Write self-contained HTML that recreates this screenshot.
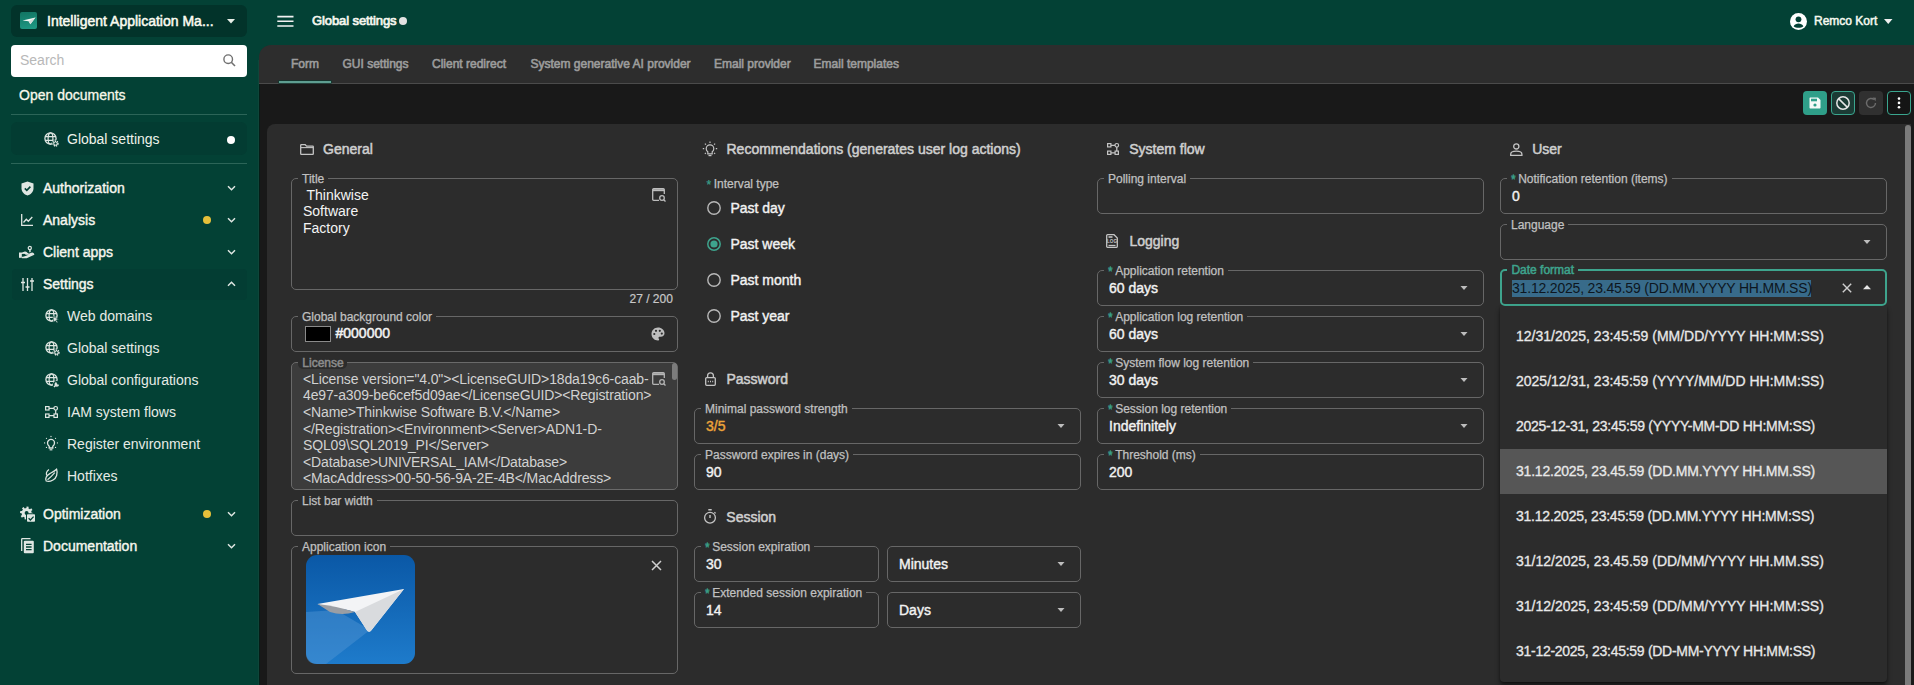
<!DOCTYPE html>
<html><head><meta charset="utf-8"><style>
*{box-sizing:border-box;margin:0;padding:0}
html,body{width:1914px;height:685px;overflow:hidden}
body{background:#034135;font-family:"Liberation Sans",sans-serif;position:relative;color:#eee}
.a{position:absolute}
.t{position:absolute;white-space:nowrap;line-height:1}
.med{-webkit-text-stroke:0.5px currentColor}
.m2{-webkit-text-stroke:0.25px currentColor}
svg{position:absolute;overflow:visible}
</style></head><body>
<div class="a" style="left:11px;top:5px;width:236px;height:32px;background:#02332a;border-radius:6px"></div>
<div class="a" style="left:20px;top:12px;width:17px;height:17px;background:linear-gradient(170deg,#117462,#1f9a85);border-radius:2px"></div>
<svg style="left:20px;top:12px;" width="17" height="17" viewBox="0 0 17 17"><path d="M2.5 8.6 L15.5 5.6 L10.4 12.2 L8.6 9.3 Z" fill="#f4f8f6"/><path d="M8.6 9.3 L15.5 5.6 L10.4 12.2Z" fill="#d2dcd9"/></svg>
<div class="t med" style="left:47px;top:14.35px;font-size:14px;color:#fbfbf0;">Intelligent Application Ma...</div>
<svg style="left:227px;top:19px;" width="8" height="5" viewBox="0 0 8 5"><path d="M0 0H8L4 4.5Z" fill="#e8efe8"/></svg>
<div class="a" style="left:11px;top:45px;width:236px;height:32px;background:#fff;border-radius:4px"></div>
<div class="t" style="left:20px;top:53.35px;font-size:14px;color:#b8b8b8;">Search</div>
<svg style="left:222px;top:53px;" width="14" height="14" viewBox="0 0 14 14"><circle cx="6.2" cy="6.2" r="4.3" fill="none" stroke="#707070" stroke-width="1.4"/><path d="M9.3 9.3L13 13" stroke="#707070" stroke-width="1.6"/></svg>
<div class="t" style="left:19px;top:88.05px;font-size:14px;color:#f8f8ea;-webkit-text-stroke:0.3px #f8f8ea">Open documents</div>
<div class="a" style="left:11px;top:114px;width:236px;height:1px;background:#2c6558"></div>
<div class="a" style="left:11px;top:122px;width:236px;height:33px;background:#033c32;border-radius:6px"></div>
<svg style="left:44px;top:132px;" width="15" height="15" viewBox="0 0 15 15"><circle cx="6.5" cy="6.5" r="5.6" fill="none" stroke="#dfe6e2" stroke-width="1.3"/><ellipse cx="6.5" cy="6.5" rx="2.4" ry="5.6" fill="none" stroke="#dfe6e2" stroke-width="1.2"/><path d="M1 4.6H12M1 8.4H12" stroke="#dfe6e2" stroke-width="1.1"/><circle cx="11.5" cy="11.5" r="3.6" fill="#034135"/><circle cx="11.5" cy="11.5" r="2.4" fill="none" stroke="#dfe6e2" stroke-width="1.6" stroke-dasharray="1.2 0.7"/><circle cx="11.5" cy="11.5" r="1.6" fill="none" stroke="#dfe6e2" stroke-width="1"/></svg>
<div class="t" style="left:67px;top:131.95px;font-size:14px;color:#eef2ea;">Global settings</div>
<div class="a" style="left:227px;top:136px;width:8px;height:8px;background:#fff;border-radius:50%"></div>
<div class="a" style="left:11px;top:163px;width:236px;height:1px;background:#2c6558"></div>
<div class="a" style="left:12px;top:269px;width:235px;height:31px;background:#033d33;border-radius:4px"></div>
<div class="t" style="left:43px;top:181.15px;font-size:14px;color:#f6f6ee;-webkit-text-stroke:0.4px #f6f6ee">Authorization</div>
<svg style="left:226.5px;top:185px;" width="9" height="6" viewBox="0 0 9 6"><path d="M1 1.2L4.5 4.7L8 1.2" fill="none" stroke="#dfe6e2" stroke-width="1.5"/></svg>
<div class="t" style="left:43px;top:213.15px;font-size:14px;color:#f6f6ee;-webkit-text-stroke:0.4px #f6f6ee">Analysis</div>
<svg style="left:226.5px;top:217px;" width="9" height="6" viewBox="0 0 9 6"><path d="M1 1.2L4.5 4.7L8 1.2" fill="none" stroke="#dfe6e2" stroke-width="1.5"/></svg>
<div class="t" style="left:43px;top:245.15px;font-size:14px;color:#f6f6ee;-webkit-text-stroke:0.4px #f6f6ee">Client apps</div>
<svg style="left:226.5px;top:249px;" width="9" height="6" viewBox="0 0 9 6"><path d="M1 1.2L4.5 4.7L8 1.2" fill="none" stroke="#dfe6e2" stroke-width="1.5"/></svg>
<div class="t" style="left:43px;top:277.15px;font-size:14px;color:#f6f6ee;-webkit-text-stroke:0.4px #f6f6ee">Settings</div>
<svg style="left:226.5px;top:281px;" width="9" height="6" viewBox="0 0 9 6"><path d="M1 4.8L4.5 1.3L8 4.8" fill="none" stroke="#dfe6e2" stroke-width="1.5"/></svg>
<svg style="left:21px;top:181px;" width="13" height="15" viewBox="0 0 13 15"><path d="M6.5 0.5L12.5 2.6V7.2C12.5 10.8 10 13.4 6.5 14.5C3 13.4 0.5 10.8 0.5 7.2V2.6Z" fill="#dfe6e2"/><path d="M3.8 7.4L5.8 9.4L9.4 5.6" fill="none" stroke="#034135" stroke-width="1.6"/></svg>
<svg style="left:21px;top:214px;" width="12" height="12" viewBox="0 0 12 12"><path d="M0.7 0V11.3H12" fill="none" stroke="#dfe6e2" stroke-width="1.3"/><path d="M2.5 8.5L5.3 5.3L7.3 7.3L11.3 3" fill="none" stroke="#dfe6e2" stroke-width="1.3"/></svg>
<svg style="left:19px;top:246px;" width="15" height="12" viewBox="0 0 15 12"><path d="M0 7.3H2.8L5 6.5C6 6.1 7 6.3 7.8 7L9 8H6.3M2.8 11.5H7.5L14.5 8.3C14.2 7.3 13.3 7 12.5 7.3L9.5 8.7" fill="#dfe6e2" stroke="#dfe6e2" stroke-width="1.4"/><rect x="0" y="7.3" width="2.8" height="4.5" fill="#dfe6e2"/><circle cx="10.8" cy="2" r="1.6" fill="none" stroke="#dfe6e2" stroke-width="1.2"/><path d="M10.8 3.6V6.3M10.8 5H12" stroke="#dfe6e2" stroke-width="1.2"/></svg>
<svg style="left:21px;top:278px;" width="13" height="13" viewBox="0 0 13 13"><path d="M2 0V13M6.5 0V13M11 0V13" stroke="#dfe6e2" stroke-width="1.3"/><path d="M0 4.5H4M4.5 9H8.5M9 3H13" stroke="#dfe6e2" stroke-width="1.6"/></svg>
<div class="t" style="left:67px;top:309.15px;font-size:14px;color:#e6ebe6;">Web domains</div>
<div class="t" style="left:67px;top:341.15px;font-size:14px;color:#e6ebe6;">Global settings</div>
<div class="t" style="left:67px;top:373.15px;font-size:14px;color:#e6ebe6;">Global configurations</div>
<div class="t" style="left:67px;top:405.15px;font-size:14px;color:#e6ebe6;">IAM system flows</div>
<div class="t" style="left:67px;top:437.15px;font-size:14px;color:#e6ebe6;">Register environment</div>
<div class="t" style="left:67px;top:469.15px;font-size:14px;color:#e6ebe6;">Hotfixes</div>
<svg style="left:45px;top:309px;" width="14" height="14" viewBox="0 0 14 14"><circle cx="6.5" cy="6.5" r="5.6" fill="none" stroke="#dfe6e2" stroke-width="1.3"/><ellipse cx="6.5" cy="6.5" rx="2.4" ry="5.6" fill="none" stroke="#dfe6e2" stroke-width="1.2"/><path d="M1 4.6H12M1 8.4H12" stroke="#dfe6e2" stroke-width="1.1"/><path d="M8 7.5L13.8 10.2L11.3 11L13 13.2L12 14L10.4 11.8L8.8 13.3Z" fill="#dfe6e2" stroke="#034135" stroke-width="0.6"/></svg>
<svg style="left:45px;top:341px;" width="15" height="15" viewBox="0 0 15 15"><circle cx="6.5" cy="6.5" r="5.6" fill="none" stroke="#dfe6e2" stroke-width="1.3"/><ellipse cx="6.5" cy="6.5" rx="2.4" ry="5.6" fill="none" stroke="#dfe6e2" stroke-width="1.2"/><path d="M1 4.6H12M1 8.4H12" stroke="#dfe6e2" stroke-width="1.1"/><circle cx="11.5" cy="11.5" r="3.6" fill="#034135"/><circle cx="11.5" cy="11.5" r="2.4" fill="none" stroke="#dfe6e2" stroke-width="1.6" stroke-dasharray="1.2 0.7"/><circle cx="11.5" cy="11.5" r="1.6" fill="none" stroke="#dfe6e2" stroke-width="1"/></svg>
<svg style="left:45px;top:373px;" width="15" height="15" viewBox="0 0 15 15"><circle cx="6.5" cy="6.5" r="5.6" fill="none" stroke="#dfe6e2" stroke-width="1.3"/><ellipse cx="6.5" cy="6.5" rx="2.4" ry="5.6" fill="none" stroke="#dfe6e2" stroke-width="1.2"/><path d="M1 4.6H12M1 8.4H12" stroke="#dfe6e2" stroke-width="1.1"/><circle cx="11.5" cy="11.5" r="3.6" fill="#034135"/><path d="M9 14L12.2 10.8M11.5 9.8A1.6 1.6 0 1 0 13.4 11.7" fill="none" stroke="#dfe6e2" stroke-width="1.5"/></svg>
<svg style="left:45px;top:406px;" width="13" height="12" viewBox="0 0 13 12"><rect x="0.6" y="0.6" width="3.4" height="3.4" fill="none" stroke="#dfe6e2" stroke-width="1.2"/><rect x="0.6" y="8" width="3.4" height="3.4" fill="none" stroke="#dfe6e2" stroke-width="1.2"/><rect x="9" y="8" width="3.4" height="3.4" fill="none" stroke="#dfe6e2" stroke-width="1.2"/><circle cx="10.7" cy="2.3" r="1.8" fill="none" stroke="#dfe6e2" stroke-width="1.2"/><path d="M4 2.3H8.9M10.7 4.1V8M4 9.7H9" stroke="#dfe6e2" stroke-width="1.2"/></svg>
<svg style="left:44px;top:436px;" width="14" height="15" viewBox="0 0 14 15"><path d="M5.2 10.2C4.1 9.4 3.5 8.2 3.5 6.9A3.5 3.5 0 0 1 10.5 6.9C10.5 8.2 9.9 9.4 8.8 10.2V12H5.2Z" fill="none" stroke="#dfe6e2" stroke-width="1.3"/><path d="M5.6 13.8H8.4" stroke="#dfe6e2" stroke-width="1.2"/><circle cx="0.60" cy="6.90" r="0.65" fill="#dfe6e2"/><circle cx="2.47" cy="2.37" r="0.65" fill="#dfe6e2"/><circle cx="7.00" cy="0.50" r="0.65" fill="#dfe6e2"/><circle cx="11.53" cy="2.37" r="0.65" fill="#dfe6e2"/><circle cx="13.40" cy="6.90" r="0.65" fill="#dfe6e2"/><circle cx="2.47" cy="11.43" r="0.65" fill="#dfe6e2"/><circle cx="11.53" cy="11.43" r="0.65" fill="#dfe6e2"/></svg>
<svg style="left:44px;top:468px;" width="14" height="15" viewBox="0 0 14 15"><path d="M2.2 13C0.8 10.6 2.5 7.3 5.8 5.6C8.4 4.3 10.6 3.3 12.6 1.3C14 5.5 12.5 10 9 12C6.8 13.3 4.2 13.8 2.2 13Z" fill="none" stroke="#dfe6e2" stroke-width="1.3"/><path d="M3.5 11.8C6 9.8 8.2 7.6 10.8 4.6" fill="none" stroke="#dfe6e2" stroke-width="1.1"/><path d="M2.8 7.5C1.8 5.3 2.6 3.2 5 1.5" fill="none" stroke="#dfe6e2" stroke-width="1.2"/></svg>
<div class="t" style="left:43px;top:507.15px;font-size:14px;color:#f6f6ee;-webkit-text-stroke:0.4px #f6f6ee">Optimization</div>
<svg style="left:226.5px;top:511px;" width="9" height="6" viewBox="0 0 9 6"><path d="M1 1.2L4.5 4.7L8 1.2" fill="none" stroke="#dfe6e2" stroke-width="1.5"/></svg>
<div class="t" style="left:43px;top:539.15px;font-size:14px;color:#f6f6ee;-webkit-text-stroke:0.4px #f6f6ee">Documentation</div>
<svg style="left:226.5px;top:543px;" width="9" height="6" viewBox="0 0 9 6"><path d="M1 1.2L4.5 4.7L8 1.2" fill="none" stroke="#dfe6e2" stroke-width="1.5"/></svg>
<div class="a" style="left:203px;top:216px;width:8px;height:8px;background:#e6c03a;border-radius:50%"></div>
<div class="a" style="left:203px;top:510px;width:8px;height:8px;background:#e6c03a;border-radius:50%"></div>
<svg style="left:20px;top:506px;" width="16" height="16" viewBox="0 0 16 16"><path d="M13.20 7.00 L12.88 9.04 L11.22 8.91 L10.27 10.39 L11.27 11.67 L9.60 12.88 L8.51 11.62 L6.80 12.00 L6.60 13.60 L4.56 13.28 L4.69 11.62 L3.21 10.67 L1.93 11.67 L0.72 10.00 L1.98 8.91 L1.60 7.20 L0.00 7.00 L0.32 4.96 L1.98 5.09 L2.93 3.61 L1.93 2.33 L3.60 1.12 L4.69 2.38 L6.40 2.00 L6.60 0.40 L8.64 0.72 L8.51 2.38 L9.99 3.33 L11.27 2.33 L12.48 4.00 L11.22 5.09 L11.60 6.80Z" fill="#dfe6e2"/><circle cx="6.6" cy="7" r="2" fill="#034135"/><rect x="6" y="7.2" width="9.6" height="8.6" rx="1" fill="#034135"/><rect x="7" y="8.2" width="8" height="7.6" rx="0.8" fill="#dfe6e2"/><path d="M8.6 12.3L10.4 14L13.6 10.6" fill="none" stroke="#034135" stroke-width="1.3"/></svg>
<svg style="left:21px;top:538px;" width="14" height="16" viewBox="0 0 14 16"><path d="M0.7 13V1.3C0.7 0.9 1 0.7 1.3 0.7H9.5" fill="none" stroke="#dfe6e2" stroke-width="1.3"/><rect x="2.8" y="2.8" width="10" height="12.5" rx="1" fill="#dfe6e2"/><path d="M5 6.3H10.6M5 9H10.6M5 11.7H10.6" stroke="#034135" stroke-width="1.3"/></svg>
<svg style="left:277px;top:15px;" width="17" height="13" viewBox="0 0 17 13"><path d="M0.3 1.6H16.5M0.3 6.3H16.5M0.3 11H16.5" stroke="#f2f2f2" stroke-width="1.6"/></svg>
<div class="t med" style="left:312px;top:13.50px;font-size:13px;color:#f6f6ee;-webkit-text-stroke:0.7px #f6f6ee;letter-spacing:-0.1px">Global settings</div>
<div class="a" style="left:399px;top:17px;width:8px;height:8px;background:#e2e2e2;border-radius:50%"></div>
<svg style="left:1790px;top:13px;" width="17" height="17" viewBox="0 0 17 17"><circle cx="8.5" cy="8.5" r="8.5" fill="#fff"/><circle cx="8.5" cy="6.3" r="2.9" fill="#034135"/><path d="M3.6 13.2C4.6 11.2 6.5 10.4 8.5 10.4S12.4 11.2 13.4 13.2C12.2 14.2 10.5 14.8 8.5 14.8S4.8 14.2 3.6 13.2Z" fill="#034135"/></svg>
<div class="t med" style="left:1814px;top:14.64px;font-size:12px;color:#f4f8ee;">Remco Kort</div>
<svg style="left:1884px;top:19px;" width="9" height="6" viewBox="0 0 9 6"><path d="M0 0H8.5L4.25 5Z" fill="#f0f0f0"/></svg>
<div class="a" style="left:259px;top:45px;width:1655px;height:39px;background:#2d2d2d;border-top-left-radius:12px;border-bottom:1px solid #4b4b4b"></div>
<div class="t" style="left:291px;top:58.44px;font-size:12px;color:#9c9c9c;-webkit-text-stroke:0.6px #9c9c9c">Form</div>
<div class="t" style="left:342.5px;top:58.44px;font-size:12px;color:#9c9c9c;-webkit-text-stroke:0.6px #9c9c9c">GUI settings</div>
<div class="t" style="left:432px;top:58.44px;font-size:12px;color:#9c9c9c;-webkit-text-stroke:0.6px #9c9c9c">Client redirect</div>
<div class="t" style="left:530.5px;top:58.44px;font-size:12px;color:#9c9c9c;-webkit-text-stroke:0.6px #9c9c9c">System generative AI provider</div>
<div class="t" style="left:714px;top:58.44px;font-size:12px;color:#9c9c9c;-webkit-text-stroke:0.6px #9c9c9c">Email provider</div>
<div class="t" style="left:813.6px;top:58.44px;font-size:12px;color:#9c9c9c;-webkit-text-stroke:0.6px #9c9c9c">Email templates</div>
<div class="a" style="left:279px;top:81px;width:52px;height:2px;background:#5e9e91;box-shadow:0 0 0 0.6px #0c3a30"></div>
<div class="a" style="left:259px;top:84px;width:1655px;height:601px;background:#191919"></div>
<div class="a" style="left:258px;top:60px;width:1px;height:625px;background:#0e463a"></div>
<div class="a" style="left:259px;top:84px;width:1px;height:601px;background:#051d17"></div>
<div class="a" style="left:1803px;top:91px;width:24px;height:24px;background:#2f9f89;border-radius:4px"></div>
<svg style="left:1809px;top:97px;" width="12" height="12" viewBox="0 0 12 12"><path d="M0.5 1.5C0.5 0.9 0.9 0.5 1.5 0.5H9L11.5 3V10.5C11.5 11.1 11.1 11.5 10.5 11.5H1.5C0.9 11.5 0.5 11.1 0.5 10.5Z" fill="#f4fbf9"/><rect x="2" y="1.7" width="6" height="2.6" fill="#2f9f89"/><circle cx="6" cy="8" r="1.6" fill="#2f9f89"/></svg>
<div class="a" style="left:1831px;top:91px;width:24px;height:24px;background:#1c3b35;border:1px solid #3aa58e;border-radius:4px"></div>
<svg style="left:1836px;top:96px;" width="14" height="14" viewBox="0 0 14 14"><circle cx="7" cy="7" r="6.2" fill="none" stroke="#e6e6e6" stroke-width="1.5"/><path d="M2.6 2.6L11.4 11.4" stroke="#e6e6e6" stroke-width="1.5"/></svg>
<div class="a" style="left:1859px;top:91px;width:24px;height:24px;background:#303030;border-radius:4px"></div>
<svg style="left:1865px;top:97px;" width="12" height="12" viewBox="0 0 12 12"><path d="M10.5 6A4.5 4.5 0 1 1 9 2.6" fill="none" stroke="#6c6c6c" stroke-width="1.4"/><path d="M7.5 0.5L11 0.8L10.5 4.3Z" fill="#6c6c6c"/></svg>
<div class="a" style="left:1887px;top:91px;width:24px;height:24px;background:#151515;border:1px solid #3aa58e;border-radius:4px"></div>
<svg style="left:1897px;top:97px;" width="4" height="12" viewBox="0 0 4 12"><circle cx="2" cy="1.6" r="1.3" fill="#fff"/><circle cx="2" cy="5.9" r="1.3" fill="#fff"/><circle cx="2" cy="10.2" r="1.3" fill="#fff"/></svg>
<div class="a" style="left:267px;top:124px;width:1644px;height:561px;background:#2c2c2c;border-top-left-radius:8px"></div>
<div class="a" style="left:1905px;top:125px;width:5.5px;height:560px;background:#7b7b7b;border-radius:3px 3px 0 0"></div>
<svg style="left:300px;top:144px;" width="14" height="11" viewBox="0 0 14 11"><path d="M0.7 1.3C0.7 0.9 1 0.7 1.3 0.7H5.2L6.6 2.1H12.7C13.1 2.1 13.3 2.4 13.3 2.7V9.7C13.3 10.1 13 10.3 12.7 10.3H1.3C0.9 10.3 0.7 10 0.7 9.7Z" fill="none" stroke="#c4c4c4" stroke-width="1.3"/><path d="M0.7 3.6H13.3" stroke="#c4c4c4" stroke-width="1.1"/></svg>
<div class="t med" style="left:323px;top:142.15px;font-size:14px;color:#cfcfcf;">General</div>
<div class="a" style="left:291px;top:178px;width:387px;height:112px;border:1px solid #676767;border-radius:5px"></div>
<div class="t" style="left:298px;top:172px;height:8px;padding:0 4px;background:#2c2c2c;font-size:12px;color:transparent">Title</div>
<div class="t m2" style="left:302px;top:172.84px;font-size:12px;color:#c0c0c0">Title</div>
<div class="t" style="left:306.5px;top:187.85px;font-size:14px;color:#f4f4f4;margin-left:-3.9px">&nbsp;Thinkwise</div>
<div class="t" style="left:303px;top:204.25px;font-size:14px;color:#f4f4f4;">Software</div>
<div class="t" style="left:303px;top:220.65px;font-size:14px;color:#f4f4f4;">Factory</div>
<svg style="left:652px;top:188px;" width="14" height="14" viewBox="0 0 14 14"><path d="M7 12.3H1.7C1.1 12.3 0.7 11.9 0.7 11.3V1.7C0.7 1.1 1.1 0.7 1.7 0.7H11.3C11.9 0.7 12.3 1.1 12.3 1.7V6" fill="none" stroke="#bdbdbd" stroke-width="1.3"/><path d="M0.7 2.2H12.3" stroke="#bdbdbd" stroke-width="2"/><circle cx="10" cy="10" r="2.3" fill="none" stroke="#bdbdbd" stroke-width="1.3"/><path d="M11.7 11.7L13.5 13.5" stroke="#bdbdbd" stroke-width="1.3"/></svg>
<div class="t" style="left:629.5px;top:292.64px;font-size:12px;color:#c8c8c8;-webkit-text-stroke:0.2px #c8c8c8">27 / 200</div>
<div class="a" style="left:291px;top:316px;width:387px;height:36px;border:1px solid #676767;border-radius:5px"></div>
<div class="t" style="left:298px;top:310px;height:8px;padding:0 4px;background:#2c2c2c;font-size:12px;color:transparent">Global background color</div>
<div class="t m2" style="left:302px;top:310.84px;font-size:12px;color:#c0c0c0">Global background color</div>
<div class="a" style="left:305px;top:326px;width:26px;height:16px;background:#000;border:1px solid #8a8a8a"></div>
<div class="t med" style="left:335.5px;top:325.95px;font-size:14px;color:#f2f2f2;">#000000</div>
<svg style="left:651px;top:327px;" width="14" height="14" viewBox="0 0 14 14"><path d="M7 0.5C3.4 0.5 0.5 3.4 0.5 7S3.4 13.5 7 13.5C7.6 13.5 8.1 13 8.1 12.4C8.1 12.1 8 11.9 7.8 11.7C7.6 11.5 7.5 11.2 7.5 10.9C7.5 10.3 8 9.8 8.6 9.8H9.9C11.9 9.8 13.5 8.2 13.5 6.2C13.5 3 10.6 0.5 7 0.5Z" fill="#bdbdbd"/><circle cx="3.3" cy="7" r="1.1" fill="#2c2c2c"/><circle cx="5" cy="3.8" r="1.1" fill="#2c2c2c"/><circle cx="8.8" cy="3.8" r="1.1" fill="#2c2c2c"/><circle cx="10.8" cy="6.6" r="1.1" fill="#2c2c2c"/></svg>
<div class="a" style="left:291px;top:362px;width:387px;height:128px;border:1px solid #6a6a6a;border-radius:5px;background:#3c3c3c;overflow:hidden"></div>
<div class="a" style="left:292px;top:363px;width:385px;height:126px;overflow:hidden;border-radius:4px">
<div class="t" style="left:11px;top:8.85px;font-size:14px;color:#d2d2d2;letter-spacing:-0.13px">&lt;License version="4.0"&gt;&lt;LicenseGUID&gt;18da19c6-caab-</div>
<div class="t" style="left:11px;top:25.40px;font-size:14px;color:#d2d2d2;letter-spacing:-0.13px">4e97-a309-be6cef5d09ae&lt;/LicenseGUID&gt;&lt;Registration&gt;</div>
<div class="t" style="left:11px;top:41.95px;font-size:14px;color:#d2d2d2;letter-spacing:-0.13px">&lt;Name&gt;Thinkwise Software B.V.&lt;/Name&gt;</div>
<div class="t" style="left:11px;top:58.50px;font-size:14px;color:#d2d2d2;letter-spacing:-0.13px">&lt;/Registration&gt;&lt;Environment&gt;&lt;Server&gt;ADN1-D-</div>
<div class="t" style="left:11px;top:75.05px;font-size:14px;color:#d2d2d2;letter-spacing:-0.13px">SQL09\SQL2019_PI&lt;/Server&gt;</div>
<div class="t" style="left:11px;top:91.60px;font-size:14px;color:#d2d2d2;letter-spacing:-0.13px">&lt;Database&gt;UNIVERSAL_IAM&lt;/Database&gt;</div>
<div class="t" style="left:11px;top:108.15px;font-size:14px;color:#d2d2d2;letter-spacing:-0.13px">&lt;MacAddress&gt;00-50-56-9A-2E-4B&lt;/MacAddress&gt;</div>
<div class="t" style="left:11px;top:124.70px;font-size:14px;color:#d2d2d2;letter-spacing:-0.13px">&lt;ActivationCode&gt;8F3A-22B1-6E9C-D4F0&lt;/ActivationCode&gt;</div>
</div>
<div class="a" style="left:672px;top:363px;width:5px;height:17px;background:#7c7c7c;border-radius:3px"></div>
<svg style="left:652px;top:372px;" width="14" height="14" viewBox="0 0 14 14"><path d="M7 12.3H1.7C1.1 12.3 0.7 11.9 0.7 11.3V1.7C0.7 1.1 1.1 0.7 1.7 0.7H11.3C11.9 0.7 12.3 1.1 12.3 1.7V6" fill="none" stroke="#b5b5b5" stroke-width="1.3"/><path d="M0.7 2.2H12.3" stroke="#b5b5b5" stroke-width="2"/><circle cx="10" cy="10" r="2.3" fill="none" stroke="#b5b5b5" stroke-width="1.3"/><path d="M11.7 11.7L13.5 13.5" stroke="#b5b5b5" stroke-width="1.3"/></svg>
<div class="a" style="left:298px;top:356px;width:49px;height:13px;background:#2c2c2c;border-radius:0 0 5px 5px"></div>
<div class="t med" style="left:302.3px;top:356.64px;font-size:12px;color:#8c8c8c;">License</div>
<div class="a" style="left:291px;top:500px;width:387px;height:36px;border:1px solid #676767;border-radius:5px"></div>
<div class="t" style="left:298px;top:494px;height:8px;padding:0 4px;background:#2c2c2c;font-size:12px;color:transparent">List bar width</div>
<div class="t m2" style="left:302px;top:494.84px;font-size:12px;color:#c0c0c0">List bar width</div>
<div class="a" style="left:291px;top:546px;width:387px;height:128px;border:1px solid #676767;border-radius:5px"></div>
<div class="t" style="left:298px;top:540px;height:8px;padding:0 4px;background:#2c2c2c;font-size:12px;color:transparent">Application icon</div>
<div class="t m2" style="left:302px;top:540.84px;font-size:12px;color:#c0c0c0">Application icon</div>
<svg style="left:306px;top:555px" width="109" height="109" viewBox="0 0 109 109">
<defs><linearGradient id="ag" x1="0" y1="0" x2="0" y2="1"><stop offset="0" stop-color="#0a58a6"/><stop offset="1" stop-color="#1e7bcb"/></linearGradient></defs>
<rect x="0" y="0" width="109" height="109" rx="11" fill="url(#ag)"/>
<path d="M0 57 L30 55 L64 75 L20 109 L11 109 Q0 109 0 98Z" fill="#5a9ad6" opacity="0.4"/>
<path d="M11.5 49 L98 34 L64.8 76 Q62 78 60 74 L49 57 Q36 53 26 54 Z" fill="#f3f4f6"/>
<path d="M11.5 49 Q30 51 49 57 Q36 61 24 57 Z" fill="#9a9ea4"/>
<path d="M49 57 L98 34 L64.8 76 Q62 78 60 74Z" fill="#d9dbde"/>
</svg>
<svg style="left:651px;top:560px;" width="11" height="11" viewBox="0 0 11 11"><path d="M1 1L10 10M10 1L1 10" stroke="#cfcfcf" stroke-width="1.5"/></svg>
<svg style="left:702px;top:141px;" width="16" height="16" viewBox="0 0 16 16"><path d="M5.8 10.8C4.8 10 4.2 8.9 4.2 7.7A3.8 3.8 0 0 1 11.8 7.7C11.8 8.9 11.2 10 10.2 10.8V12.8H5.8Z" fill="none" stroke="#c4c4c4" stroke-width="1.2"/><path d="M6.5 14.6H9.5" stroke="#c4c4c4" stroke-width="1.2"/><path d="M8 0.6V2M0.8 7.7H2.2M13.8 7.7H15.2M2.9 2.6L3.9 3.6M13.1 2.6L12.1 3.6M2.9 12.8L3.9 11.8M13.1 12.8L12.1 11.8" stroke="#c4c4c4" stroke-width="1.2"/></svg>
<div class="t med" style="left:726.5px;top:142.15px;font-size:14px;color:#cfcfcf;">Recommendations (generates user log actions)</div>
<div class="t m2" style="left:706.5px;top:177.74px;font-size:12px;color:#c0c0c0"><span style="color:#3a9f88;display:inline-block;transform:translateY(0.6px)">*</span><span style="margin-left:2.5px">Interval type</span></div>
<svg style="left:707px;top:201.2px;" width="14" height="14" viewBox="0 0 14 14"><circle cx="7" cy="7" r="6.2" fill="none" stroke="#b8b8b8" stroke-width="1.4"/></svg>
<div class="t" style="left:730.4px;top:200.95px;font-size:14px;color:#f2f2f2;-webkit-text-stroke:0.4px #f2f2f2">Past day</div>
<svg style="left:707px;top:237.2px;" width="14" height="14" viewBox="0 0 14 14"><circle cx="7" cy="7" r="6.2" fill="none" stroke="#3ea48d" stroke-width="1.5"/><circle cx="7" cy="7" r="3.6" fill="#3ea48d"/></svg>
<div class="t" style="left:730.4px;top:236.95px;font-size:14px;color:#f2f2f2;-webkit-text-stroke:0.4px #f2f2f2">Past week</div>
<svg style="left:707px;top:273.2px;" width="14" height="14" viewBox="0 0 14 14"><circle cx="7" cy="7" r="6.2" fill="none" stroke="#b8b8b8" stroke-width="1.4"/></svg>
<div class="t" style="left:730.4px;top:272.95px;font-size:14px;color:#f2f2f2;-webkit-text-stroke:0.4px #f2f2f2">Past month</div>
<svg style="left:707px;top:309.2px;" width="14" height="14" viewBox="0 0 14 14"><circle cx="7" cy="7" r="6.2" fill="none" stroke="#b8b8b8" stroke-width="1.4"/></svg>
<div class="t" style="left:730.4px;top:308.95px;font-size:14px;color:#f2f2f2;-webkit-text-stroke:0.4px #f2f2f2">Past year</div>
<svg style="left:704.5px;top:372px;" width="11" height="14" viewBox="0 0 11 14"><path d="M2.6 5.5V3.8A2.9 2.9 0 0 1 8.4 3.8V5.5" fill="none" stroke="#c4c4c4" stroke-width="1.3"/><rect x="0.7" y="5.6" width="9.6" height="7.7" rx="1" fill="none" stroke="#c4c4c4" stroke-width="1.3"/><path d="M2.8 9.5H8.2" stroke="#c4c4c4" stroke-width="1.3" stroke-dasharray="1 1.2"/></svg>
<div class="t med" style="left:726.5px;top:372.15px;font-size:14px;color:#cfcfcf;">Password</div>
<div class="a" style="left:694px;top:408px;width:387px;height:36px;border:1px solid #676767;border-radius:5px"></div>
<div class="t" style="left:701px;top:402px;height:8px;padding:0 4px;background:#2c2c2c;font-size:12px;color:transparent">Minimal password strength</div>
<div class="t m2" style="left:705px;top:402.84px;font-size:12px;color:#c0c0c0">Minimal password strength</div>
<div class="t" style="left:706px;top:418.75px;font-size:14px;color:#eea53a;-webkit-text-stroke:0.4px #eea53a">3/5</div>
<svg style="left:1056.5px;top:424px;" width="8" height="5" viewBox="0 0 8 5"><path d="M0.5 0H7.5L4 4Z" fill="#bdbdbd"/></svg>
<div class="a" style="left:694px;top:454px;width:387px;height:36px;border:1px solid #676767;border-radius:5px"></div>
<div class="t" style="left:701px;top:448px;height:8px;padding:0 4px;background:#2c2c2c;font-size:12px;color:transparent">Password expires in (days)</div>
<div class="t m2" style="left:705px;top:448.84px;font-size:12px;color:#c0c0c0">Password expires in (days)</div>
<div class="t" style="left:706px;top:464.75px;font-size:14px;color:#f2f2f2;-webkit-text-stroke:0.4px #f2f2f2">90</div>
<svg style="left:704px;top:509px;" width="13" height="15" viewBox="0 0 13 15"><circle cx="6" cy="8.7" r="5.4" fill="none" stroke="#c4c4c4" stroke-width="1.3"/><path d="M4.3 0.8H7.7M6 6V9" stroke="#c4c4c4" stroke-width="1.4"/><path d="M10.4 3.2L11.6 4.4" stroke="#c4c4c4" stroke-width="1.3"/></svg>
<div class="t med" style="left:726.3px;top:510.15px;font-size:14px;color:#cfcfcf;">Session</div>
<div class="a" style="left:694px;top:546px;width:185px;height:36px;border:1px solid #676767;border-radius:5px"></div>
<div class="t" style="left:701px;top:540px;height:8px;padding:0 4px;background:#2c2c2c;font-size:12px;color:transparent"><span style="color:#3a9f88;display:inline-block;transform:translateY(0.6px)">*</span><span style="margin-left:2.5px">Session expiration</span></div>
<div class="t m2" style="left:705px;top:540.84px;font-size:12px;color:#c0c0c0"><span style="color:#3a9f88;display:inline-block;transform:translateY(0.6px)">*</span><span style="margin-left:2.5px">Session expiration</span></div>
<div class="t" style="left:706px;top:556.75px;font-size:14px;color:#f2f2f2;-webkit-text-stroke:0.4px #f2f2f2">30</div>
<div class="a" style="left:887px;top:546px;width:194px;height:36px;border:1px solid #676767;border-radius:5px"></div>
<div class="t" style="left:899px;top:556.75px;font-size:14px;color:#f2f2f2;-webkit-text-stroke:0.4px #f2f2f2">Minutes</div>
<svg style="left:1056.5px;top:562px;" width="8" height="5" viewBox="0 0 8 5"><path d="M0.5 0H7.5L4 4Z" fill="#bdbdbd"/></svg>
<div class="a" style="left:694px;top:592px;width:185px;height:36px;border:1px solid #676767;border-radius:5px"></div>
<div class="t" style="left:701px;top:586px;height:8px;padding:0 4px;background:#2c2c2c;font-size:12px;color:transparent"><span style="color:#3a9f88;display:inline-block;transform:translateY(0.6px)">*</span><span style="margin-left:2.5px">Extended session expiration</span></div>
<div class="t m2" style="left:705px;top:586.84px;font-size:12px;color:#c0c0c0"><span style="color:#3a9f88;display:inline-block;transform:translateY(0.6px)">*</span><span style="margin-left:2.5px">Extended session expiration</span></div>
<div class="t" style="left:706px;top:602.75px;font-size:14px;color:#f2f2f2;-webkit-text-stroke:0.4px #f2f2f2">14</div>
<div class="a" style="left:887px;top:592px;width:194px;height:36px;border:1px solid #676767;border-radius:5px"></div>
<div class="t" style="left:899px;top:602.75px;font-size:14px;color:#f2f2f2;-webkit-text-stroke:0.4px #f2f2f2">Days</div>
<svg style="left:1056.5px;top:608px;" width="8" height="5" viewBox="0 0 8 5"><path d="M0.5 0H7.5L4 4Z" fill="#bdbdbd"/></svg>
<svg style="left:1107px;top:143px;" width="12" height="12" viewBox="0 0 12 12"><rect x="0.6" y="0.6" width="3.3" height="3.3" fill="none" stroke="#c4c4c4" stroke-width="1.2"/><rect x="0.6" y="8.1" width="3.3" height="3.3" fill="none" stroke="#c4c4c4" stroke-width="1.2"/><rect x="8.1" y="8.1" width="3.3" height="3.3" fill="none" stroke="#c4c4c4" stroke-width="1.2"/><circle cx="9.8" cy="2.3" r="1.8" fill="none" stroke="#c4c4c4" stroke-width="1.2"/><path d="M3.9 2.3H8M9.8 4.1V8.1M3.9 9.8H8.1" stroke="#c4c4c4" stroke-width="1.3"/></svg>
<div class="t med" style="left:1129.2px;top:142.15px;font-size:14px;color:#cfcfcf;">System flow</div>
<div class="a" style="left:1097px;top:178px;width:387px;height:36px;border:1px solid #676767;border-radius:5px"></div>
<div class="t" style="left:1104px;top:172px;height:8px;padding:0 4px;background:#2c2c2c;font-size:12px;color:transparent">Polling interval</div>
<div class="t m2" style="left:1108px;top:172.84px;font-size:12px;color:#c0c0c0">Polling interval</div>
<svg style="left:1106px;top:234px;" width="12" height="14" viewBox="0 0 12 14"><path d="M1.5 0.7H8L11.3 4V12.6C11.3 13 11 13.3 10.6 13.3H1.5C1.1 13.3 0.7 13 0.7 12.6V1.4C0.7 1 1.1 0.7 1.5 0.7Z" fill="none" stroke="#c4c4c4" stroke-width="1.3"/><rect x="2.5" y="2.2" width="4" height="1.6" fill="#c4c4c4"/><path d="M2.5 11.5H9.5" stroke="#c4c4c4" stroke-width="1.3"/><text x="6" y="9.3" font-size="4.6" font-family="Liberation Sans" font-weight="bold" fill="#c4c4c4" text-anchor="middle">LOG</text></svg>
<div class="t med" style="left:1129.4px;top:234.15px;font-size:14px;color:#cfcfcf;">Logging</div>
<div class="a" style="left:1097px;top:270px;width:387px;height:36px;border:1px solid #676767;border-radius:5px"></div>
<div class="t" style="left:1104px;top:264px;height:8px;padding:0 4px;background:#2c2c2c;font-size:12px;color:transparent"><span style="color:#3a9f88;display:inline-block;transform:translateY(0.6px)">*</span><span style="margin-left:2.5px">Application retention</span></div>
<div class="t m2" style="left:1108px;top:264.84px;font-size:12px;color:#c0c0c0"><span style="color:#3a9f88;display:inline-block;transform:translateY(0.6px)">*</span><span style="margin-left:2.5px">Application retention</span></div>
<div class="t" style="left:1109px;top:280.75px;font-size:14px;color:#f2f2f2;-webkit-text-stroke:0.4px #f2f2f2">60 days</div>
<svg style="left:1459.5px;top:286px;" width="8" height="5" viewBox="0 0 8 5"><path d="M0.5 0H7.5L4 4Z" fill="#bdbdbd"/></svg>
<div class="a" style="left:1097px;top:316px;width:387px;height:36px;border:1px solid #676767;border-radius:5px"></div>
<div class="t" style="left:1104px;top:310px;height:8px;padding:0 4px;background:#2c2c2c;font-size:12px;color:transparent"><span style="color:#3a9f88;display:inline-block;transform:translateY(0.6px)">*</span><span style="margin-left:2.5px">Application log retention</span></div>
<div class="t m2" style="left:1108px;top:310.84px;font-size:12px;color:#c0c0c0"><span style="color:#3a9f88;display:inline-block;transform:translateY(0.6px)">*</span><span style="margin-left:2.5px">Application log retention</span></div>
<div class="t" style="left:1109px;top:326.75px;font-size:14px;color:#f2f2f2;-webkit-text-stroke:0.4px #f2f2f2">60 days</div>
<svg style="left:1459.5px;top:332px;" width="8" height="5" viewBox="0 0 8 5"><path d="M0.5 0H7.5L4 4Z" fill="#bdbdbd"/></svg>
<div class="a" style="left:1097px;top:362px;width:387px;height:36px;border:1px solid #676767;border-radius:5px"></div>
<div class="t" style="left:1104px;top:356px;height:8px;padding:0 4px;background:#2c2c2c;font-size:12px;color:transparent"><span style="color:#3a9f88;display:inline-block;transform:translateY(0.6px)">*</span><span style="margin-left:2.5px">System flow log retention</span></div>
<div class="t m2" style="left:1108px;top:356.84px;font-size:12px;color:#c0c0c0"><span style="color:#3a9f88;display:inline-block;transform:translateY(0.6px)">*</span><span style="margin-left:2.5px">System flow log retention</span></div>
<div class="t" style="left:1109px;top:372.75px;font-size:14px;color:#f2f2f2;-webkit-text-stroke:0.4px #f2f2f2">30 days</div>
<svg style="left:1459.5px;top:378px;" width="8" height="5" viewBox="0 0 8 5"><path d="M0.5 0H7.5L4 4Z" fill="#bdbdbd"/></svg>
<div class="a" style="left:1097px;top:408px;width:387px;height:36px;border:1px solid #676767;border-radius:5px"></div>
<div class="t" style="left:1104px;top:402px;height:8px;padding:0 4px;background:#2c2c2c;font-size:12px;color:transparent"><span style="color:#3a9f88;display:inline-block;transform:translateY(0.6px)">*</span><span style="margin-left:2.5px">Session log retention</span></div>
<div class="t m2" style="left:1108px;top:402.84px;font-size:12px;color:#c0c0c0"><span style="color:#3a9f88;display:inline-block;transform:translateY(0.6px)">*</span><span style="margin-left:2.5px">Session log retention</span></div>
<div class="t" style="left:1109px;top:418.75px;font-size:14px;color:#f2f2f2;-webkit-text-stroke:0.4px #f2f2f2">Indefinitely</div>
<svg style="left:1459.5px;top:424px;" width="8" height="5" viewBox="0 0 8 5"><path d="M0.5 0H7.5L4 4Z" fill="#bdbdbd"/></svg>
<div class="a" style="left:1097px;top:454px;width:387px;height:36px;border:1px solid #676767;border-radius:5px"></div>
<div class="t" style="left:1104px;top:448px;height:8px;padding:0 4px;background:#2c2c2c;font-size:12px;color:transparent"><span style="color:#3a9f88;display:inline-block;transform:translateY(0.6px)">*</span><span style="margin-left:2.5px">Threshold (ms)</span></div>
<div class="t m2" style="left:1108px;top:448.84px;font-size:12px;color:#c0c0c0"><span style="color:#3a9f88;display:inline-block;transform:translateY(0.6px)">*</span><span style="margin-left:2.5px">Threshold (ms)</span></div>
<div class="t" style="left:1109px;top:464.75px;font-size:14px;color:#f2f2f2;-webkit-text-stroke:0.4px #f2f2f2">200</div>
<svg style="left:1510px;top:143px;" width="13" height="13" viewBox="0 0 13 13"><circle cx="6.3" cy="3.4" r="2.6" fill="none" stroke="#c4c4c4" stroke-width="1.3"/><path d="M0.7 12.3V11.2C0.7 9.4 3.3 8.2 6.3 8.2S11.9 9.4 11.9 11.2V12.3Z" fill="none" stroke="#c4c4c4" stroke-width="1.3"/></svg>
<div class="t med" style="left:1532.2px;top:142.15px;font-size:14px;color:#cfcfcf;">User</div>
<div class="a" style="left:1500px;top:178px;width:387px;height:36px;border:1px solid #676767;border-radius:5px"></div>
<div class="t" style="left:1507px;top:172px;height:8px;padding:0 4px;background:#2c2c2c;font-size:12px;color:transparent"><span style="color:#3a9f88;display:inline-block;transform:translateY(0.6px)">*</span><span style="margin-left:2.5px">Notification retention (items)</span></div>
<div class="t m2" style="left:1511px;top:172.84px;font-size:12px;color:#c0c0c0"><span style="color:#3a9f88;display:inline-block;transform:translateY(0.6px)">*</span><span style="margin-left:2.5px">Notification retention (items)</span></div>
<div class="t" style="left:1512px;top:188.75px;font-size:14px;color:#f2f2f2;-webkit-text-stroke:0.4px #f2f2f2">0</div>
<div class="a" style="left:1500px;top:224px;width:387px;height:36px;border:1px solid #676767;border-radius:5px"></div>
<div class="t" style="left:1507px;top:218px;height:8px;padding:0 4px;background:#2c2c2c;font-size:12px;color:transparent">Language</div>
<div class="t m2" style="left:1511px;top:218.84px;font-size:12px;color:#c0c0c0">Language</div>
<svg style="left:1862.5px;top:240px;" width="8" height="5" viewBox="0 0 8 5"><path d="M0.5 0H7.5L4 4Z" fill="#bdbdbd"/></svg>
<div class="a" style="left:1500px;top:269px;width:387px;height:37px;border:2px solid #3ea48d;border-radius:5px"></div>
<div class="t" style="left:1507px;top:263px;height:8px;padding:0 4px;background:#2c2c2c;font-size:12px;color:transparent">Date format</div>
<div class="t med" style="left:1511.4px;top:264.44px;font-size:12px;color:#3ea48d;">Date format</div>
<div class="a" style="left:1512px;top:280px;width:299px;height:17px;background:#386b8a"></div>
<div class="t" style="left:1512px;top:280.75px;font-size:14px;color:#0d1620;letter-spacing:-0.19px">31.12.2025, 23.45.59 (DD.MM.YYYY HH.MM.SS)</div>
<svg style="left:1842px;top:283px;" width="10" height="10" viewBox="0 0 10 10"><path d="M0.8 0.8L9.2 9.2M9.2 0.8L0.8 9.2" stroke="#cfcfcf" stroke-width="1.4"/></svg>
<svg style="left:1863px;top:284.5px;" width="8" height="5" viewBox="0 0 8 5"><path d="M0 4.2H8L4 0Z" fill="#e6e6e6"/></svg>
<div class="a" style="left:1500px;top:306px;width:387px;height:376px;background:#2c2c2c;box-shadow:0 4px 5px rgba(0,0,0,0.45),0 1px 2px rgba(0,0,0,0.35);border-radius:0 0 4px 4px"></div>
<div class="a" style="left:1500px;top:449px;width:387px;height:45px;background:#565656"></div>
<div class="t" style="left:1516px;top:329.15px;font-size:14px;color:#e8e8e8;letter-spacing:0px;-webkit-text-stroke:0.3px #e8e8e8">12/31/2025, 23:45:59 (MM/DD/YYYY HH:MM:SS)</div>
<div class="t" style="left:1516px;top:374.15px;font-size:14px;color:#e8e8e8;letter-spacing:0px;-webkit-text-stroke:0.3px #e8e8e8">2025/12/31, 23:45:59 (YYYY/MM/DD HH:MM:SS)</div>
<div class="t" style="left:1516px;top:419.15px;font-size:14px;color:#e8e8e8;letter-spacing:-0.26px;-webkit-text-stroke:0.3px #e8e8e8">2025-12-31, 23:45:59 (YYYY-MM-DD HH:MM:SS)</div>
<div class="t" style="left:1516px;top:464.15px;font-size:14px;color:#e8e8e8;letter-spacing:-0.21px;-webkit-text-stroke:0.3px #e8e8e8">31.12.2025, 23.45.59 (DD.MM.YYYY HH.MM.SS)</div>
<div class="t" style="left:1516px;top:509.15px;font-size:14px;color:#e8e8e8;letter-spacing:-0.23px;-webkit-text-stroke:0.3px #e8e8e8">31.12.2025, 23:45:59 (DD.MM.YYYY HH:MM:SS)</div>
<div class="t" style="left:1516px;top:554.15px;font-size:14px;color:#e8e8e8;letter-spacing:0px;-webkit-text-stroke:0.3px #e8e8e8">31/12/2025, 23.45.59 (DD/MM/YYYY HH.MM.SS)</div>
<div class="t" style="left:1516px;top:599.15px;font-size:14px;color:#e8e8e8;letter-spacing:0px;-webkit-text-stroke:0.3px #e8e8e8">31/12/2025, 23:45:59 (DD/MM/YYYY HH:MM:SS)</div>
<div class="t" style="left:1516px;top:644.15px;font-size:14px;color:#e8e8e8;letter-spacing:-0.28px;-webkit-text-stroke:0.3px #e8e8e8">31-12-2025, 23:45:59 (DD-MM-YYYY HH:MM:SS)</div>
</body></html>
